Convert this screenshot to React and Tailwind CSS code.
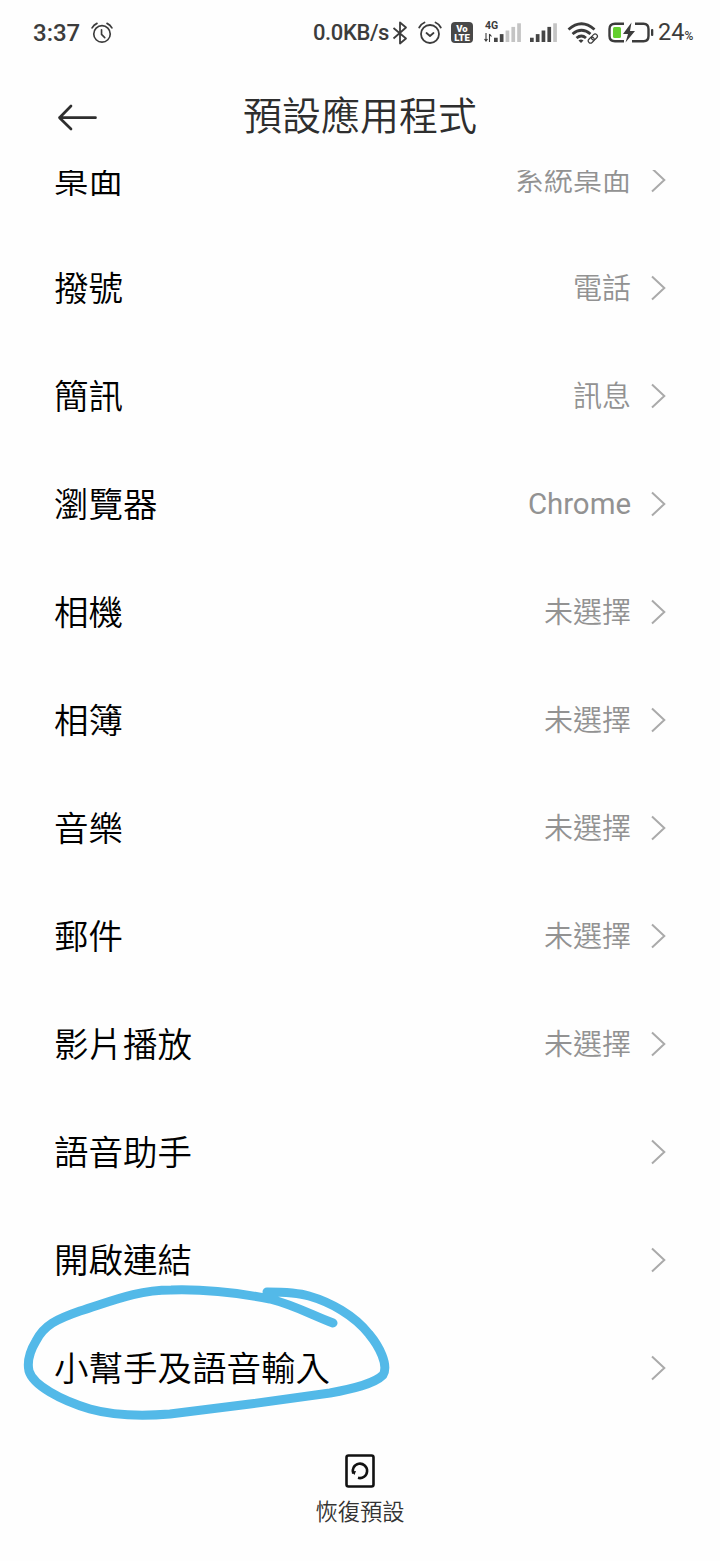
import { useState } from "react";

const defaults = [
  { id: "home", label: "桌面", value: "系統桌面" },
  { id: "dialer", label: "撥號", value: "電話" },
  { id: "sms", label: "簡訊", value: "訊息" },
  { id: "browser", label: "瀏覽器", value: "Chrome", latin: true },
  { id: "camera", label: "相機", value: "未選擇" },
  { id: "gallery", label: "相簿", value: "未選擇" },
  { id: "music", label: "音樂", value: "未選擇" },
  { id: "mail", label: "郵件", value: "未選擇" },
  { id: "video", label: "影片播放", value: "未選擇" },
  { id: "assistant", label: "語音助手", value: "" },
  { id: "links", label: "開啟連結", value: "" },
  { id: "input", label: "小幫手及語音輸入", value: "" },
];

function AlarmIcon({ className, hands }) {
  return (
    <svg className={className} viewBox="0 0 24 24" fill="none" stroke="currentColor" strokeWidth="1.8" strokeLinecap="round" strokeLinejoin="round">
      <circle cx="12" cy="13" r="9" />
      <path d="M1.2 6.5Q3 3 6.5 1.500M22.800 6.5Q21 3 17.500 1.500" />
      <path d={hands} />
    </svg>
  );
}

function SignalIcon({ className, bars }) {
  return (
    <svg className={className} viewBox="0 0 27 20" preserveAspectRatio="none">
      {bars.map((on, i) => (
        <rect key={i} x={i * 5.8} y={15.5 - i * 3.8} width="3.7" height={4.5 + i * 3.8} fill={on ? "#454545" : "#c4c4c4"} />
      ))}
    </svg>
  );
}

function StatusBar() {
  return (
    <div className="flex h-[65px] items-center pl-[33px] text-[#3c3c3c]">
      <span className="w-[58px] text-[24px] font-medium leading-none">3:37</span>
      <AlarmIcon className="h-[22px] w-[22px]" hands="M11.500 8.500V13.500L15 17" />
      <span className="ml-[200px] w-[79px] text-[22px] font-medium leading-none tracking-[-0.4px] whitespace-nowrap">0.0KB/s</span>
      <svg className="h-[24px] w-[16px]" viewBox="0 0 16 24" fill="none" stroke="currentColor" strokeWidth="1.8" strokeLinejoin="round">
        <path d="M1.500 7L14 17.500L8 22.500V1.500L14 6.500L1.500 17.500" />
      </svg>
      <AlarmIcon className="ml-[10px] h-[24px] w-[24px]" hands="M8.500 12L12 15L15.500 12" />
      <div className="ml-[9px] flex h-[21px] w-[22px] flex-col items-center justify-center rounded-[4px] bg-[#484848] text-[9.500px] font-black leading-[9px] text-white">
        <span>Vo</span>
        <span>LTE</span>
      </div>
      <div className="ml-[11px] flex h-[24px] w-[38px] flex-col">
        <span className="h-[9px] pl-[1px] text-[10.500px] font-bold leading-[9px]">4G</span>
        <div className="-mt-[7px] flex items-end">
          <svg className="h-[9px] w-[9px]" viewBox="0 0 9 9" fill="none" stroke="currentColor" strokeWidth="1.100">
            <path d="M2 0V8M0.500 6L2 8L3.500 6M5.500 9V1M7.500 3.500L5.500 1" />
          </svg>
          <SignalIcon className="ml-[1px] h-[19px] w-[27px]" bars={[true, true, false, false, false]} />
        </div>
      </div>
      <SignalIcon className="ml-[8px] h-[19px] w-[27px]" bars={[true, true, true, true, false]} />
      <svg className="ml-[10px] h-[22px] w-[33px]" viewBox="0 0 33 22" fill="none" stroke="currentColor">
        <path d="M1.500 7.500Q14.500 -4 27.500 7.500" strokeWidth="2.8" />
        <path d="M5.500 12Q14.500 4.500 23.500 12" strokeWidth="2.800" />
        <path d="M9.500 16Q14.500 12 19 16" strokeWidth="2.800" />
        <path d="M11.500 18.500Q14 16.500 16.500 18.500L14 21Z" fill="currentColor" stroke="none" />
        <g transform="rotate(-45 26 16)" strokeWidth="1.200">
          <rect x="20" y="14" width="6.500" height="4.500" rx="2.200" />
          <rect x="24.500" y="14" width="6.500" height="4.500" rx="2.200" />
        </g>
      </svg>
      <svg className="ml-[8px] h-[22px] w-[46px]" viewBox="0 0 46 22" fill="none">
        <path d="M16 1.700H7Q1.500 1.700 1.500 7V14Q1.500 19.300 7 19.300H16M27 1.700H35.500Q40.500 1.700 40.500 7V14Q40.500 19.300 35.500 19.300H24" stroke="currentColor" strokeWidth="2.400" />
        <rect x="5" y="5" width="8" height="11" rx="1.500" fill="#63cf2e" />
        <path d="M23.500 0.500L15 12H20L17.500 20.500L27 9H22Z" fill="currentColor" />
        <rect x="43" y="7" width="2.300" height="7" rx="1" fill="currentColor" />
      </svg>
      <span className="ml-[4px] text-[23.500px] leading-none">24</span>
      <span className="mt-[7px] text-[12px] font-medium leading-none">%</span>
    </div>
  );
}

function Header() {
  return (
    <header className="relative flex h-[105px] items-center justify-center">
      <button className="absolute left-[57px] top-[38px]" aria-label="返回">
        <svg className="h-[29px] w-[40px]" viewBox="0 0 40 29" fill="none" stroke="#2e2e2e" strokeWidth="2.700" strokeLinecap="round" strokeLinejoin="round">
          <path d="M38.500 14.700H2.500M14 3L2.500 14.700L14 26" />
        </svg>
      </button>
      <h1 className="text-[39px] font-[350] leading-none text-[#2e2e2e]">預設應用程式</h1>
    </header>
  );
}

function SettingRow({ item, selected, onSelect }) {
  return (
    <li className="relative">
      <button onClick={() => onSelect(item.id)} className="flex h-[108px] w-full items-center pl-[54px] pr-[54px]">
        <span className="pt-[2px] text-[34.500px] font-[350] leading-none text-black">{item.label}</span>
        <span className={`ml-auto pt-[2px] leading-none text-[#929292] ${item.latin ? "text-[29.4px] font-normal" : "text-[29px] font-[350]"}`}>
          {item.value}
        </span>
        <svg className="ml-[19px] h-[26px] w-[16px]" viewBox="0 0 16 26" fill="none" stroke="#aaaaaa" strokeWidth="2">
          <path d="M2 1.500L14.300 13L2 24.500" />
        </svg>
      </button>
      {selected && (
        <svg className="pointer-events-none absolute left-[20px] -top-[34px] h-[144px] w-[376px]" viewBox="20 1280 376 144" fill="none" stroke="#53b9e8" strokeWidth="9" strokeLinecap="round" strokeLinejoin="round">
          <path d="M333 1323C312 1315 294 1305 270 1299C239 1293 203 1289 171 1290C137 1290 112 1301 80 1311C57 1319 44 1325 36 1341C30 1351 27 1362 29 1371C33 1385 60 1400 90 1409C115 1416 145 1416 170 1414L250 1404L330 1393C352 1389 374 1384 383 1375C389 1365 379 1346 369 1334C354 1315 330 1302 309 1296C296 1292 279 1292 267 1292" />
        </svg>
      )}
    </li>
  );
}

export default function App() {
  const [selected, setSelected] = useState("input");

  return (
    <div className="flex h-[1561px] w-[720px] flex-col overflow-hidden bg-[#fefefe] font-[Roboto,'Noto_Sans_CJK_TC',sans-serif]">
      <StatusBar />
      <Header />
      <main className="h-[1270px] shrink-0 overflow-hidden">
        <ul className="-mt-[44px]">
          {defaults.map((item) => (
            <SettingRow key={item.id} item={item} selected={selected === item.id} onSelect={setSelected} />
          ))}
        </ul>
      </main>
      <footer className="flex flex-1 justify-center pt-[14px]">
        <button className="flex flex-col items-center" onClick={() => setSelected("")}>
          <svg className="h-[34px] w-[30px]" viewBox="0 0 30 34" fill="none" stroke="#111111" strokeWidth="2.600">
            <rect x="1.500" y="1.500" width="27" height="31" rx="2" />
            <path d="M8.200 19.500A7.200 7.200 0 1 1 13 23.800" />
            <path d="M6.500 17.500L11 17L9.500 21Z" fill="#111111" stroke="none" />
          </svg>
          <span className="mt-[13px] text-[22.300px] font-[350] leading-none text-[#333333]">恢復預設</span>
        </button>
      </footer>
    </div>
  );
}
